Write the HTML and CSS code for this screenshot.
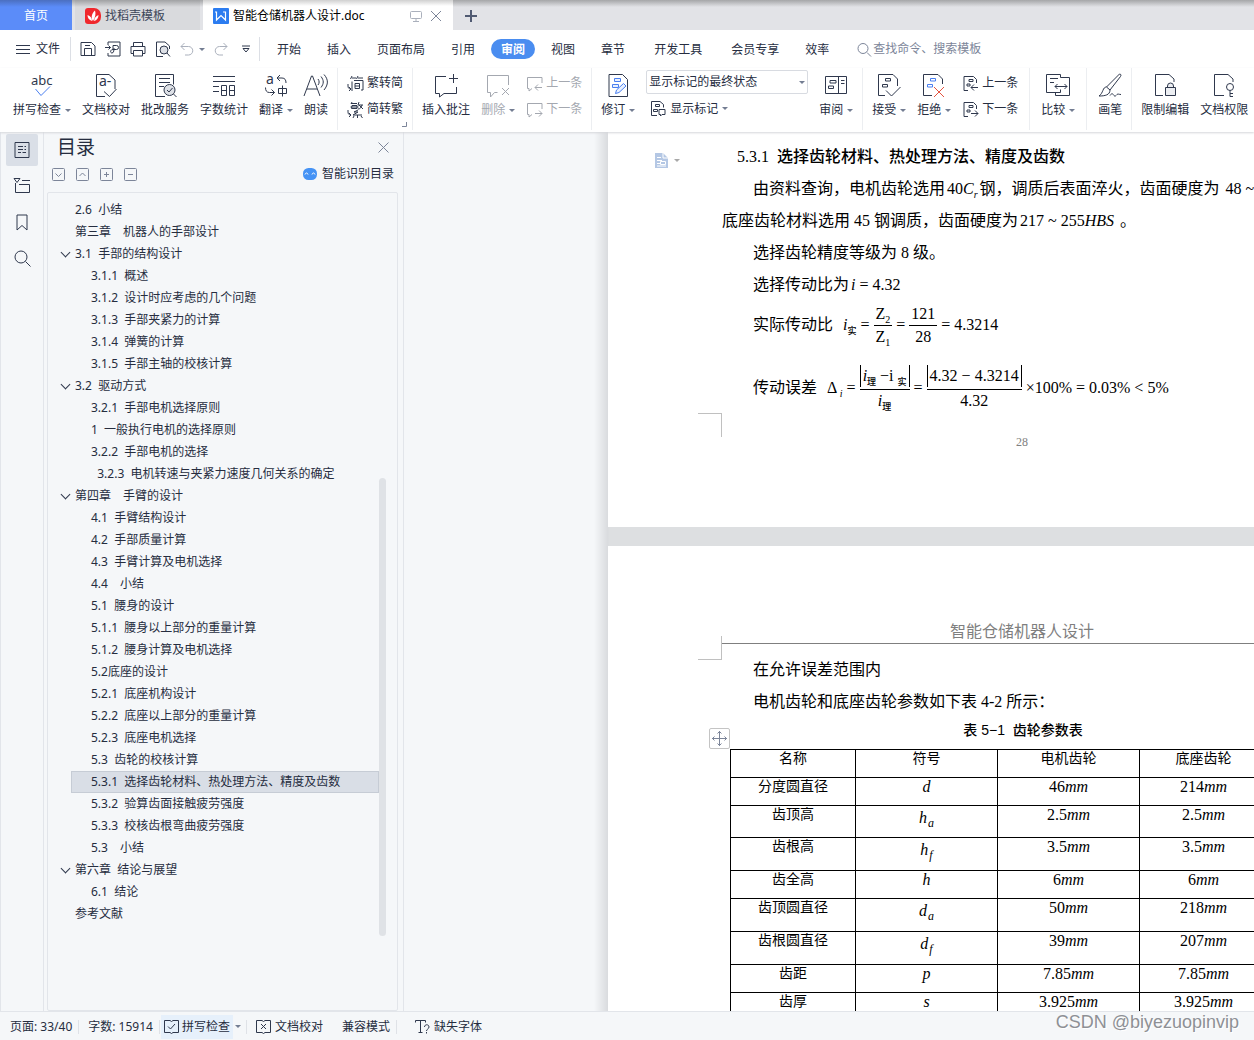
FILE: index.html
```html
<!DOCTYPE html>
<html lang="zh-CN">
<head>
<meta charset="utf-8">
<title>智能仓储机器人设计.doc</title>
<link rel="stylesheet" href="styles.css">
</head>
<body>
<header class="tabs">
  <button class="tab tab-home">首页</button>
  <button class="tab tab-store">
    <svg width="16" height="16" viewBox="0 0 16 16"><path d="M3 0h6a7 7 0 0 1 7 7v2a7 7 0 0 1-7 7H3a3 3 0 0 1-3-3V3a3 3 0 0 1 3-3z" fill="#f0282d"/><path d="M8 13C5.500 9.500 7 5 10 2.500c1 3.500.5 6.500-2 10.500zM7 13C4 12 2.500 10 2.500 7 5.500 8 7 10 7 13zM9 13c.3-3 2-5 4.500-6 0 3-1.500 5.200-4.500 6z" fill="#fff"/></svg>
    <span>找稻壳模板</span>
  </button>
  <button class="tab tab-doc">
    <svg width="16" height="16" viewBox="0 0 16 16"><rect width="16" height="16" rx="1" fill="#2b7cf0"/><path d="M2 4h1.500v8L8 7.500l4.500 4.500V4H10" fill="none" stroke="#fff" stroke-width="1.200"/></svg>
    <span class="doc-name">智能仓储机器人设计.doc</span>
    <svg class="line pale" width="12" height="12" viewBox="0 0 12 12"><rect x=".5" y="1.500" width="11" height="7" rx="1"/><path d="M6 8.500v3M3 11.500h6"/></svg>
    <svg class="line mid" width="12" height="12" viewBox="0 0 12 12"><path d="M1 1l10 10M11 1L1 11"/></svg>
  </button>
  <button class="tab tab-new" aria-label="新建"><svg width="12" height="12" viewBox="0 0 12 12"><path d="M6 0v12M0 6h12" stroke="#505a72" stroke-width="2"/></svg></button>
</header>

<nav class="menu">
  <button class="file"><svg class="line" width="14" height="11" viewBox="0 0 14 11"><path d="M0 1.500h14M0 5.500h14M0 9.500h14"/></svg>文件</button>
  <div class="quick">
    <button aria-label="保存"><svg class="line" width="16" height="16" viewBox="0 0 16 16"><path d="M1 1.500h10.500L15 5v9.500H1zM4.500 14V7.500h7V14M5 4.500h5"/></svg></button>
    <button aria-label="输出为PDF"><svg class="line" width="16" height="16" viewBox="0 0 16 16"><path d="M3 4V1h12v14H3v-3M0 6.500h5.500M3.500 4.500l2 2-2 2M8 4.500h3.500a2 2 0 0 1 0 4H8V4.500M8 8.500c-3 0-3 3.500-1 3.500s2-3.500 2-5"/></svg></button>
    <button aria-label="打印"><svg class="line" width="16" height="16" viewBox="0 0 16 16"><path d="M3.500 5V1.500h9V5M3.500 12.500H1V5.500h14v7h-2.500M3.500 9.500h9v5.500h-9z"/></svg></button>
    <button aria-label="打印预览"><svg class="line" width="16" height="16" viewBox="0 0 16 16"><path d="M8 15.500H1.500V1H10l4.500 4v3"/><circle cx="9" cy="9" r="4" fill="#dde0e6"/><path d="M12 12l3 3.500"/></svg></button>
    <button class="undo" aria-label="撤销"><svg class="line pale" width="14" height="14" viewBox="0 0 14 14"><path d="M4.500 1L1 4.500 4.500 8M1 4.500h7.500a4.200 4.200 0 0 1 0 8.500H5"/></svg><i class="caret"></i></button>
    <button aria-label="恢复"><svg class="line pale" width="14" height="14" viewBox="0 0 14 14"><path d="M9.500 1L13 4.500 9.500 8M13 4.500H5.500a4.200 4.200 0 0 0 0 8.500H9"/></svg></button>
    <button aria-label="更多"><svg class="line" width="8" height="8" viewBox="0 0 8 8"><path d="M0 1h8M1 3.500h6L4 7z"/></svg></button>
  </div>
  <div class="menu-tabs">
    <button>开始</button><button>插入</button><button>页面布局</button><button>引用</button><button class="active">审阅</button><button>视图</button><button>章节</button><button class="roomy">开发工具</button><button>会员专享</button><button>效率</button>
  </div>
  <label class="search">
    <svg class="line mid" width="15" height="15" viewBox="0 0 15 15"><circle cx="6" cy="6.500" r="5"/><path d="M10 10.500l4 4"/></svg>
    <input type="text" placeholder="查找命令、搜索模板" aria-label="查找命令、搜索模板">
  </label>
</nav>

<section class="ribbon">
  <button class="big"><svg class="line" width="24" height="25" viewBox="0 0 24 25"><text x="1" y="12" class="abc">abc</text><path d="M5.500 16l5.500 6.500 9-9" stroke="#4a7ff0"/></svg><span>拼写检查<i class="caret"></i></span></button>
  <button class="big"><svg class="line" width="24" height="25" viewBox="0 0 24 25"><path d="M11 23.500H2.500v-22H15l6 5.500v9M10 18.500l5.500 5L22.500 16"/><text x="5" y="13" class="glyph">a-</text></svg><span>文档校对</span></button>
  <button class="big"><svg class="line" width="24" height="25" viewBox="0 0 24 25"><path d="M12 23.500H2.500v-22h18v10M6 5.500h11M6 9.500h11M6 13.500h5"/><circle cx="16.500" cy="17" r="5.500" fill="#dde0e6"/><path d="M14 17l2 2 3.500-4M20.500 21l3 3"/></svg><span>批改服务</span></button>
  <button class="big"><svg class="line" width="24" height="25" viewBox="0 0 24 25"><path d="M1 3.500h22M1 8.500h22M1 13.500h6M1 18.500h6M9.500 12.500h5v10h-5zM17.500 12.500h5v10h-5zM9.500 17.500h5M17.500 17.500h5"/></svg><span>字数统计</span></button>
  <button class="big"><svg class="line" width="24" height="25" viewBox="0 0 24 25"><text x="2" y="11" class="glyph">a</text><path d="M16 2l-3 3 3 3M13 5h5c3 0 4 2 4 5M1.500 14.500c0 3 1 5 4 5h5M7.500 16.500l3 3-3 3M14.500 15.500h8v5h-8zM18.500 12.500v11"/></svg><span>翻译<i class="caret"></i></span></button>
  <button class="big"><svg class="line" width="24" height="25" viewBox="0 0 24 25"><path d="M0 23L7.500 3h1L16 23M3 16h10M14 6c1.500 2 1.500 4 0 6M17 3.500c3 4 3 7 0 11M20 1.500c4.500 5 4.500 10 0 15.500"/></svg><span>朗读</span></button>
  <span class="sep"></span>
  <div class="stack">
    <button><svg class="line" width="17" height="17" viewBox="0 0 17 17"><path d="M5 1L3.500 4M5 3h4M11 1L9.500 4M11 3h5M5 6.500V16M7 5.500h9V15h-2M8 8.500h4.500v5H8zM8 11h4M1 9v2c0 2 1 3 3 3M2 16l2-2-2-2"/></svg>繁转简</button>
    <button><svg class="line" width="17" height="17" viewBox="0 0 17 17"><path d="M5 1L4 3M4 2.500h6M5 4.500h5v3H4.500zM3.500 6h8M12 1l-1 3h5M15 4c-1 3-2 4-4 4M12 4l4 4M11 9l-4 2h4l-5 3h9M10.500 14v3M7 15l-1 2M14 15l1.500 2M1 9v2c0 2 1 3 3 3M2 16l2-2-2-2"/></svg>简转繁</button>
    <svg class="launcher line mid" width="5" height="5" viewBox="0 0 5 5"><path d="M0 4.500h4.500V0"/></svg>
  </div>
  <span class="sep"></span>
  <button class="big"><svg class="line" width="24" height="25" viewBox="0 0 24 25"><path d="M12 3.500H1.500v17h4v3.500l4.500-3.500h12.500V14M19.500 1v9M15 5.500h9"/></svg><span>插入批注</span></button>
  <button class="big off"><svg class="line" width="24" height="25" viewBox="0 0 24 25"><path d="M22.500 12V2.500h-21v17h3V24l4-4.500h3M16 15l7 7M23 15l-7 7"/></svg><span>删除<i class="caret"></i></span></button>
  <div class="stack off">
    <button><svg class="line" width="17" height="17" viewBox="0 0 17 17"><path d="M16 8V2.500H1.500v11H3V16l3-2.500M16 12.500H9M12 9.500l-3 3 3 3"/></svg>上一条</button>
    <button><svg class="line" width="17" height="17" viewBox="0 0 17 17"><path d="M16 8V2.500H1.500v11H3V16l3-2.500M9 12.500h7M13 9.500l3 3-3 3"/></svg>下一条</button>
  </div>
  <span class="sep"></span>
  <button class="big"><svg class="line" width="24" height="25" viewBox="0 0 24 25"><path d="M3 1.500h13.500l5 5v17H3z"/><path d="M8.500 5.500h6v3h-6zM6.500 11.500h6v3h-6zM9.500 20.500l1-3.500 7-6.500 2.500 2.500-7 6.500z" stroke="#4a7ff0" fill="#e8f0ff"/></svg><span>修订<i class="caret"></i></span></button>
  <div class="markup">
    <span class="select"><select aria-label="显示标记"><option>显示标记的最终状态</option></select><i class="caret"></i></span>
    <button><svg class="line" width="16" height="17" viewBox="0 0 16 17"><path d="M7 15.500H1.500v-14H10l3.500 3v3M5.500 4.500h4v2h-4zM3.500 9.500h4v2h-4zM9 9.500h6v5h-3L10.500 16v-1.500H9z"/></svg>显示标记<i class="caret"></i></button>
  </div>
  <button class="big"><svg class="line" width="24" height="25" viewBox="0 0 24 25"><path d="M1.500 3.500h21v17h-21zM14.500 3.500v17M6 7.500h6v2.500H6zM4.500 13h5v2.500h-5zM17 7.500h3.500M17 10.500h3.500"/></svg><span>审阅<i class="caret"></i></span></button>
  <span class="sep"></span>
  <button class="big"><svg class="line" width="24" height="25" viewBox="0 0 24 25"><path d="M8 22.500H1.500v-21H16l4.500 4.500v7M8.500 5.500h5v2.500h-5zM5.500 11.500h5V14h-5zM9 17.500l5.500 5.500 9-9"/></svg><span>接受<i class="caret"></i></span></button>
  <button class="big"><svg class="line" width="24" height="25" viewBox="0 0 24 25"><path d="M10 22.500H1.500v-21H16l4.500 4.500v5"/><path d="M8.500 5.500h5v2.500h-5zM5.500 11.500h5V14h-5z" stroke="#4a7ff0"/><path d="M12 14l10 10M22 14L12 24" stroke="#e5533f"/></svg><span>拒绝<i class="caret"></i></span></button>
  <div class="stack">
    <button><svg class="line" width="17" height="17" viewBox="0 0 17 17"><path d="M6 15.500H2v-14h9.500l3 3V8M7 4.500h4v2H7zM5 9h3v2H5zM16 12.500H9M12 9.500l-3 3 3 3"/></svg>上一条</button>
    <button><svg class="line" width="17" height="17" viewBox="0 0 17 17"><path d="M6 15.500H2v-14h9.500l3 3V8M7 4.500h4v2H7zM5 9h3v2H5zM9 12.500h7M13 9.500l3 3-3 3"/></svg>下一条</button>
  </div>
  <span class="sep wide"></span>
  <button class="big"><svg class="line" width="24" height="25" viewBox="0 0 24 25"><path d="M14.500 4.500v-3H.5v18h14v-3M4 5.500h8M4 9.500h4M14.500 4.500h9v18h-14v-3M9 13.500h12M11.500 11L9 13.500l2.500 2.500M18.500 11l2.500 2.500-2.500 2.500"/></svg><span>比较<i class="caret"></i></span></button>
  <span class="sep wide"></span>
  <button class="big"><svg class="line" width="24" height="25" viewBox="0 0 24 25"><path d="M8.500 14L21.500 1c2 0 1.500 2 1 2.500L12 17M8.500 14c-4 0-3 6-7.500 9 6 0 11-1 11-6zM12 22.500c2-3 3-1.500 4 0s2 0 3-1 2 0 4 0"/></svg><span>画笔</span></button>
  <span class="sep"></span>
  <button class="big"><svg class="line" width="24" height="25" viewBox="0 0 24 25"><path d="M10 22.500H2.500v-21H16l5 4.500v3"/><path d="M14.500 14.500V13a3 3 0 0 1 6 0v1.500M12.500 14.500h10v8h-10z" fill="#eceef2"/></svg><span>限制编辑</span></button>
  <button class="big"><svg class="line" width="24" height="25" viewBox="0 0 24 25"><path d="M12 22.500H2.500v-21H16l5 4.500v3"/><circle cx="18" cy="14" r="3.500"/><path d="M18 17.500v6M18 20.500h3M18 23.500h3"/></svg><span>文档权限</span></button>
</section>

<main class="work">
  <aside class="rail">
    <button class="on" aria-label="目录"><svg class="line" width="16" height="18" viewBox="0 0 16 18"><path d="M1 1.500h14v15H1zM4 5.500h5M10.500 5.500H12M4 8.500h5M10.500 8.500H12M4 11.500h3M8.500 11.500H12"/></svg></button>
    <button aria-label="章节"><svg class="line" width="16" height="16" viewBox="0 0 16 16"><path d="M0 .5h6L3 4.500zM8 2.500h8M1.500 5v9.500h14v-8H5"/></svg></button>
    <button aria-label="书签"><svg class="line" width="12" height="17" viewBox="0 0 12 17"><path d="M1 1h10v15l-5-4.500L1 16z"/></svg></button>
    <button aria-label="查找"><svg class="line" width="17" height="17" viewBox="0 0 17 17"><circle cx="7" cy="7" r="6"/><path d="M11.500 11.500l5 5"/></svg></button>
  </aside>

  <aside class="outline">
    <div class="outline-head"><h2>目录</h2><button aria-label="关闭"><svg class="line mid" width="11" height="11" viewBox="0 0 11 11"><path d="M.5.5l10 10M10.500.5l-10 10"/></svg></button></div>
    <div class="outline-tools">
      <button aria-label="展开"><svg class="line mid" width="13" height="13" viewBox="0 0 13 13"><rect x=".5" y=".5" width="12" height="12" rx="1"/><path d="M3.500 5.500l3 3 3-3"/></svg></button>
      <button aria-label="收起"><svg class="line mid" width="13" height="13" viewBox="0 0 13 13"><rect x=".5" y=".5" width="12" height="12" rx="1"/><path d="M3.500 8l3-3 3 3"/></svg></button>
      <button aria-label="升级"><svg class="line mid" width="13" height="13" viewBox="0 0 13 13"><rect x=".5" y=".5" width="12" height="12" rx="1"/><path d="M6.500 4v5M4 6.500h5"/></svg></button>
      <button aria-label="降级"><svg class="line mid" width="13" height="13" viewBox="0 0 13 13"><rect x=".5" y=".5" width="12" height="12" rx="1"/><path d="M4 6.500h5"/></svg></button>
      <button class="smart"><svg width="14" height="12" viewBox="0 0 14 12"><rect width="14" height="12" rx="5.500" fill="#4593f5"/><path d="M2 6.500c.5-2 2.500-2 3 0M9 6.500c.5-2 2.500-2 3 0" fill="none" stroke="#fff"/></svg>智能识别目录</button>
    </div>
    <nav class="tree">
      <div class="tree-list">
        <a href="#" class="l1">2.6  小结</a>
        <a href="#" class="l1">第三章　机器人的手部设计</a>
        <a href="#" class="l1 open">3.1  手部的结构设计</a>
        <a href="#" class="l2">3.1.1  概述</a>
        <a href="#" class="l2">3.1.2  设计时应考虑的几个问题</a>
        <a href="#" class="l2">3.1.3  手部夹紧力的计算</a>
        <a href="#" class="l2">3.1.4  弹簧的计算</a>
        <a href="#" class="l2">3.1.5  手部主轴的校核计算</a>
        <a href="#" class="l1 open">3.2  驱动方式</a>
        <a href="#" class="l2">3.2.1  手部电机选择原则</a>
        <a href="#" class="l2">1  一般执行电机的选择原则</a>
        <a href="#" class="l2">3.2.2  手部电机的选择</a>
        <a href="#" class="l2">  3.2.3  电机转速与夹紧力速度几何关系的确定</a>
        <a href="#" class="l1 open">第四章　手臂的设计</a>
        <a href="#" class="l2">4.1  手臂结构设计</a>
        <a href="#" class="l2">4.2  手部质量计算</a>
        <a href="#" class="l2">4.3  手臂计算及电机选择</a>
        <a href="#" class="l2">4.4　小结</a>
        <a href="#" class="l2">5.1  腰身的设计</a>
        <a href="#" class="l2">5.1.1  腰身以上部分的重量计算</a>
        <a href="#" class="l2">5.1.2  腰身计算及电机选择</a>
        <a href="#" class="l2">5.2底座的设计</a>
        <a href="#" class="l2">5.2.1  底座机构设计</a>
        <a href="#" class="l2">5.2.2  底座以上部分的重量计算</a>
        <a href="#" class="l2">5.2.3  底座电机选择</a>
        <a href="#" class="l2">5.3  齿轮的校核计算</a>
        <a href="#" class="l2 current">5.3.1  选择齿轮材料、热处理方法、精度及齿数</a>
        <a href="#" class="l2">5.3.2  验算齿面接触疲劳强度</a>
        <a href="#" class="l2">5.3.3  校核齿根弯曲疲劳强度</a>
        <a href="#" class="l2">5.3　小结</a>
        <a href="#" class="l1 open">第六章  结论与展望</a>
        <a href="#" class="l2">6.1  结论</a>
        <a href="#" class="l1">参考文献</a>
      </div>
      <span class="thumb"></span>
    </nav>
  </aside>

  <div class="canvas">
    <article class="page page-a">
      <span class="note"><svg width="13" height="15" viewBox="0 0 13 15"><path d="M0 0h8l5 5v10H0z" fill="#b4c7e4"/><path d="M8 0v5h5M2 4.500h4M2 7.500h5M2 10.500h3M5.500 8.500h5v3h-5zM2 13h9" fill="none" stroke="#fff"/></svg><i class="caret"></i></span>
      <h3>5.3.1 <span class="cjk">选择齿轮材料、热处理方法、精度及齿数</span></h3>
      <p class="indent">由资料查询，电机齿轮选用<span class="m">40<em>C</em><sub><em>r</em></sub></span>钢，调质后表面淬火，齿面硬度为 <span class="m">48 ~ 55</span></p>
      <p>底座齿轮材料选用 45 钢调质，齿面硬度为<span class="m">217 ~ 255<em>HBS</em></span> 。</p>
      <p class="indent">选择齿轮精度等级为 8 级。</p>
      <p class="indent">选择传动比为<span class="m"><em>i</em> = 4.32</span></p>
      <p class="indent formula">实际传动比<span class="eq"><span><em>i</em><sub class="hz">实</sub></span><span>=</span><span class="frac"><span>Z<sub>2</sub></span><span>Z<sub>1</sub></span></span><span>=</span><span class="frac"><span>121</span><span>28</span></span><span>=</span><span>4.3214</span></span></p>
      <p class="indent formula tall">传动误差<span class="eq"><span>Δ<sub><em> i</em></sub></span><span>=</span><span class="frac"><span class="abs"><em>i</em><sub class="hz">理</sub> −i <sub class="hz">实</sub></span><span><em>i</em><sub class="hz">理</sub></span></span><span>=</span><span class="frac"><span class="abs">4.32 − 4.3214</span><span>4.32</span></span><span>×100%</span><span>=</span><span>0.03%</span><span>&lt;</span><span>5%</span></span></p>
      <footer>28</footer>
      <i class="corner"></i>
    </article>
    <article class="page page-b">
      <div class="page-header">智能仓储机器人设计</div>
      <i class="corner"></i>
      <p class="indent">在允许误差范围内</p>
      <p class="indent">电机齿轮和底座齿轮参数如下表 4-2 所示：</p>
      <span class="mover"><svg class="line mid" width="15" height="15" viewBox="0 0 15 15"><path d="M7.500 0v15M0 7.500h15M5.500 2.500l2-2 2 2M5.500 12.500l2 2 2-2M2.500 5.500l-2 2 2 2M12.500 5.500l2 2-2 2"/></svg></span>
      <table>
        <caption>表 5−1&nbsp; 齿轮参数表</caption>
        <colgroup><col class="c1"><col class="c2"><col class="c2"><col class="c3"></colgroup>
        <tr class="r28"><th>名称</th><th>符号</th><th>电机齿轮</th><th>底座齿轮</th></tr>
        <tr class="r28"><td>分度圆直径</td><td class="m"><em>d</em></td><td class="m">46<em>mm</em></td><td class="m">214<em>mm</em></td></tr>
        <tr class="r32"><td>齿顶高</td><td class="m low"><em>h<sub>a</sub></em></td><td class="m">2.5<em>mm</em></td><td class="m">2.5<em>mm</em></td></tr>
        <tr class="r33"><td>齿根高</td><td class="m low"><em>h<sub>f</sub></em></td><td class="m">3.5<em>mm</em></td><td class="m">3.5<em>mm</em></td></tr>
        <tr class="r28"><td>齿全高</td><td class="m"><em>h</em></td><td class="m">6<em>mm</em></td><td class="m">6<em>mm</em></td></tr>
        <tr class="r33"><td>齿顶圆直径</td><td class="m low"><em>d<sub>a</sub></em></td><td class="m">50<em>mm</em></td><td class="m">218<em>mm</em></td></tr>
        <tr class="r33"><td>齿根圆直径</td><td class="m low"><em>d<sub>f</sub></em></td><td class="m">39<em>mm</em></td><td class="m">207<em>mm</em></td></tr>
        <tr class="r28"><td>齿距</td><td class="m"><em>p</em></td><td class="m">7.85<em>mm</em></td><td class="m">7.85<em>mm</em></td></tr>
        <tr class="r28"><td>齿厚</td><td class="m"><em>s</em></td><td class="m">3.925<em>mm</em></td><td class="m">3.925<em>mm</em></td></tr>
      </table>
    </article>
  </div>
</main>

<footer class="status">
  <span class="cell">页面: 33/40</span><i class="bar"></i>
  <span class="cell">字数: 15914</span><i class="bar"></i>
  <button class="spell"><svg class="line" width="15" height="15" viewBox="0 0 15 15"><path d="M6 1.500H.5v12H6l1.500 1 1.500-1h5.500v-12H9l-1.500 1zM4 7.500l2.500 2.500L11 5"/></svg>拼写检查</button><i class="caret"></i><i class="bar"></i>
  <button class="cell"><svg class="line" width="15" height="15" viewBox="0 0 15 15"><path d="M6 1.500H.5v12H6l1.500 1 1.500-1h5.500v-12H9l-1.500 1zM5 5l5 5M10 5l-5 5"/></svg>文档校对</button>
  <button class="cell">兼容模式</button><i class="bar"></i>
  <button class="cell fonts"><svg class="line" width="15" height="15" viewBox="0 0 15 15"><path d="M.5 3.500v-2h10v2M5.500 1.500v12M3.500 13.500h4M9.500 8c0-3 4.500-3 4.500 0 0 2-2.500 2-2.500 4M11.500 13v1.500"/></svg>缺失字体</button>
  <span class="watermark">CSDN @biyezuopinvip</span>
</footer>
</body>
</html>
```

FILE: styles.css
```css
* { box-sizing: border-box; }

body {
  margin: 0;
  height: 100vh;
  display: flex;
  flex-direction: column;
  overflow: hidden;
  background: #f5f7f9;
  color: #262d3f;
  font: 12px/16px "Noto Sans", "Noto Sans CJK SC", sans-serif;
  white-space: nowrap;
}

button {
  display: flex;
  align-items: center;
  margin: 0;
  padding: 0;
  border: 0;
  background: none;
  color: inherit;
  font: inherit;
  white-space: nowrap;
}

svg { display: block; flex: none; overflow: visible; }

.line { fill: none; stroke: #2f384d; stroke-width: 1; }
.line.mid { stroke: #7c8599; }
.line.pale { stroke: #aab0bc; }
.line text { stroke: none; fill: #2f384d; }
.abc { font-size: 13px; }
.glyph { font-size: 14px; }

.caret {
  flex: none;
  border: 3px solid transparent;
  border-top-color: #737d92;
  border-bottom: 0;
}

/* document tabs */
.tabs {
  display: flex;
  flex: none;
  height: 30px;
  background: linear-gradient(#a5a6a8, #e2e3e7 7px);
}
.tab { gap: 4px; padding-top: 2px; font-size: 12px; }
.tab-home { width: 72px; justify-content: center; background: linear-gradient(#4b6fc0, #5b8cf9 7px); color: #fff; }
.tab-store { width: 125px; margin-left: 3px; padding-left: 10px; background: linear-gradient(#a0a1a3, #d9dadd 7px); color: #3d4659; }
.tab-doc { width: 250px; margin-left: 3px; padding: 2px 11px 0 10px; background: linear-gradient(#d0d0d0, #fff 6px); color: #000; }
.doc-name { flex: 1; text-align: left; }
.tab-doc .mid { margin-left: 4px; }
.tab-new { padding-left: 12px; }

/* menu row */
.menu { display: flex; flex: none; align-items: center; height: 38px; background: #fff; }
.file { height: 24px; padding: 0 10px 0 16px; gap: 6px; border-right: 1px solid #dcdfe5; }
.quick { display: flex; align-items: center; height: 24px; gap: 9px; padding: 0 9px; border-right: 1px solid #dcdfe5; }
.quick .undo { gap: 5px; }
.quick button:last-child { margin-left: 5px; }
.menu-tabs { display: flex; padding-left: 4px; }
.menu-tabs button { padding: 1px 13px 0; height: 20px; }
.menu-tabs .active { margin: 0 3px; padding: 1px 10px 0; border-radius: 10px; background: #4a8df0; color: #fff; font-weight: 700; }
.menu-tabs .roomy { padding: 1px 16px 0; }
.search { display: flex; flex: 1; align-items: center; gap: 1px; padding-left: 15px; }
.search input { flex: 1; min-width: 0; border: 0; padding: 0; background: none; font: inherit; }
.search input::placeholder { color: #7c8599; opacity: 1; }

/* ribbon */
.ribbon {
  position: relative;
  z-index: 2;
  display: flex;
  flex: none;
  gap: 11px;
  height: 64px;
  padding-left: 13px;
  background: #fff;
  box-shadow: 0 1px 2px #d5d7da;
}
.big { flex: none; flex-direction: column; gap: 4px; padding-top: 5px; align-self: flex-start; }
.big span, .markup button { display: flex; align-items: center; }
.big .caret { margin: 0 0 0 4px; }
.sep { flex: none; width: 1px; height: 62px; margin: 0 -2px; background: #eceef1; }
.sep.wide { margin: 0; }
.stack { position: relative; display: flex; flex: none; flex-direction: column; gap: 10px; padding-top: 7px; height: 62px; }
.stack button { gap: 3px; height: 16px; }
.launcher { position: absolute; right: -4px; bottom: 3px; }
.off { color: #a4a8b0; }
.off .line { stroke: #a4a8b0; }
.markup { display: flex; flex: none; flex-direction: column; gap: 6px; width: 162px; padding-top: 2px; }
.select { position: relative; display: block; }
.select select {
  width: 100%;
  height: 24px;
  padding: 0 2px;
  border: 1px solid #d8dbe1;
  border-radius: 2px;
  background: #fff;
  color: inherit;
  font: inherit;
  appearance: none;
}
.select .caret { position: absolute; right: 3px; top: 11px; }
.markup button { gap: 4px; padding-left: 4px; }

/* work area */
.work { display: flex; flex: 1; min-height: 0; overflow: hidden; }

.rail { display: flex; flex: none; flex-direction: column; gap: 4px; width: 44px; padding: 2px 0 0 5px; border: solid #e2e5ea; border-width: 0 1px; }
.rail button { justify-content: center; width: 32px; height: 32px; border-radius: 2px; }
.rail .on { background: #dadfe7; }

.outline { display: flex; flex: none; flex-direction: column; width: 360px; padding: 0 5px 0 3px; border-right: 1px solid #e2e5ea; }
.outline-head { display: flex; align-items: center; justify-content: space-between; height: 30px; padding: 0 9px 0 10px; }
.outline-head h2 { margin: 0; font-size: 19px; line-height: 28px; font-weight: 400; }
.outline-tools { display: flex; align-items: center; gap: 11px; height: 24px; margin-bottom: 6px; padding: 0 4px 0 5px; }
.smart { gap: 5px; margin-left: auto; }

.tree { display: flex; flex: 1; min-height: 0; justify-content: space-between; padding: 6px 11px 0 23px; border: 1px solid #e2e5ea; border-radius: 2px; }
.tree-list { display: flex; flex: 1; flex-direction: column; }
.tree a { display: flex; align-items: center; flex: none; height: 22px; color: inherit; text-decoration: none; white-space: pre; border: 1px solid transparent; }
.tree .l1 { padding-left: 3px; }
.tree .l2 { padding-left: 19px; }
.tree .open { margin-left: -12px; padding-left: 2px; }
.tree .open::before { content: ""; width: 6px; height: 6px; margin: -4px 6px 0 0; border: solid #2f384d; border-width: 0 1px 1px 0; transform: rotate(45deg); }
.tree .current { border-color: #c6ccd5; background: #d9dee6; }
.thumb { flex: none; width: 7px; height: 458px; margin-top: 279px; border-radius: 4px; background: #dfe2e6; }

/* document canvas */
.canvas { flex: 1; min-width: 0; padding-left: 204px; overflow: hidden; background: linear-gradient(90deg, #f5f7f9 190px, #d9dbde 204px, #dddfe1 205px); }
.page {
  position: relative;
  width: 828px;
  padding: 9px 114px 0;
  background: #fff;
  color: #000;
  font: 16px/32px "Liberation Serif", "Noto Sans CJK SC", serif;
}
.page-a { height: 395px; margin-bottom: 19px; }
.page-b { height: 1100px; padding-top: 70px; }
.page p, .page h3 { margin: 0; height: 32px; font-size: 16px; font-weight: 400; }
.page h3 { padding-left: 15px; white-space: pre; }
.page h3 .cjk { margin-left: 4px; font-weight: 500; }
.page .indent { padding-left: 31px; }
.page em { font-style: italic; }
.page sub { font-size: 10px; line-height: 0; vertical-align: -4px; }
.page .hz { font-size: 9px; font-weight: 500; }
.m { padding: 0 2px; }
.page .formula { display: flex; align-items: center; height: 48px; }
.page .tall { height: 78px; }
.eq { display: flex; align-items: center; gap: 4px; margin-left: 10px; line-height: 22px; }
.frac { display: flex; flex-direction: column; align-items: center; }
.frac > span { padding: 0 2px; }
.frac > span:last-child { align-self: stretch; border-top: 1px solid #000; text-align: center; }
.tall .frac > span:first-child { margin-bottom: 2px; }
.frac .abs { border: solid #000; border-width: 0 1px; }
.page footer { color: #7f7f7f; font-size: 12px; line-height: 30px; text-align: center; }
.corner { position: absolute; left: 90px; width: 24px; height: 24px; }
.page-a .corner { top: 281px; border: solid #c0c0c0; border-width: 1px 1px 0 0; }
.page-b .corner { top: 90px; border: solid #c0c0c0; border-width: 0 1px 1px 0; }
.note { position: absolute; left: 47px; top: 21px; display: flex; align-items: center; gap: 6px; }
.note .caret { border-top-color: #a8a8a8; }
.page-header { height: 28px; margin-bottom: 10px; border-bottom: 1px solid #7f7f7f; color: #7f7f7f; text-align: center; }
.mover { position: absolute; left: 101px; top: 182px; display: grid; place-items: center; width: 21px; height: 21px; border: 1px solid #c4c4c4; border-radius: 2px; background: #fff; }

.page table { width: 537px; margin-left: 8px; border-collapse: collapse; table-layout: fixed; line-height: 18px; }
.page caption { padding: 0 0 7px 48px; font: 500 14px/24px "Liberation Sans", "Noto Sans CJK SC", sans-serif; text-align: center; }
.page th, .page td { padding: 0; border: 1px solid #000; font-size: 14px; font-weight: 400; text-align: center; vertical-align: top; }
.page td.m { font-size: 16px; }
.page td.low { padding-top: 3px; }
.page td sub { padding-left: 1px; font-size: 12px; }
.c1 { width: 125px; }
.c2 { width: 142px; }
.c3 { width: 128px; }
.r28 { height: 28px; }
.r32 { height: 32px; }
.r33 { height: 33px; }

/* status bar */
.status { position: relative; display: flex; flex: none; align-items: center; height: 29px; padding: 1px 0 0 1px; border-top: 1px solid #e2e5ea; background: #f5f7f9; }
.cell { gap: 4px; padding: 0 6px 0 9px; }
.cell + .cell { padding-left: 13px; }
.bar { width: 1px; height: 14px; background: #dfe2e7; }
.spell { gap: 3px; height: 24px; margin-left: 1px; padding: 0 3px; background: #e6f0fb; }
.status .caret { margin: 0 5px 0 2px; }
.status .fonts { padding-left: 18px; }
.watermark { position: absolute; right: 15px; top: 0; color: #8e9095; font: 18px/20px "Liberation Sans", sans-serif; text-shadow: 1px 1px 0 #fff; }
```
